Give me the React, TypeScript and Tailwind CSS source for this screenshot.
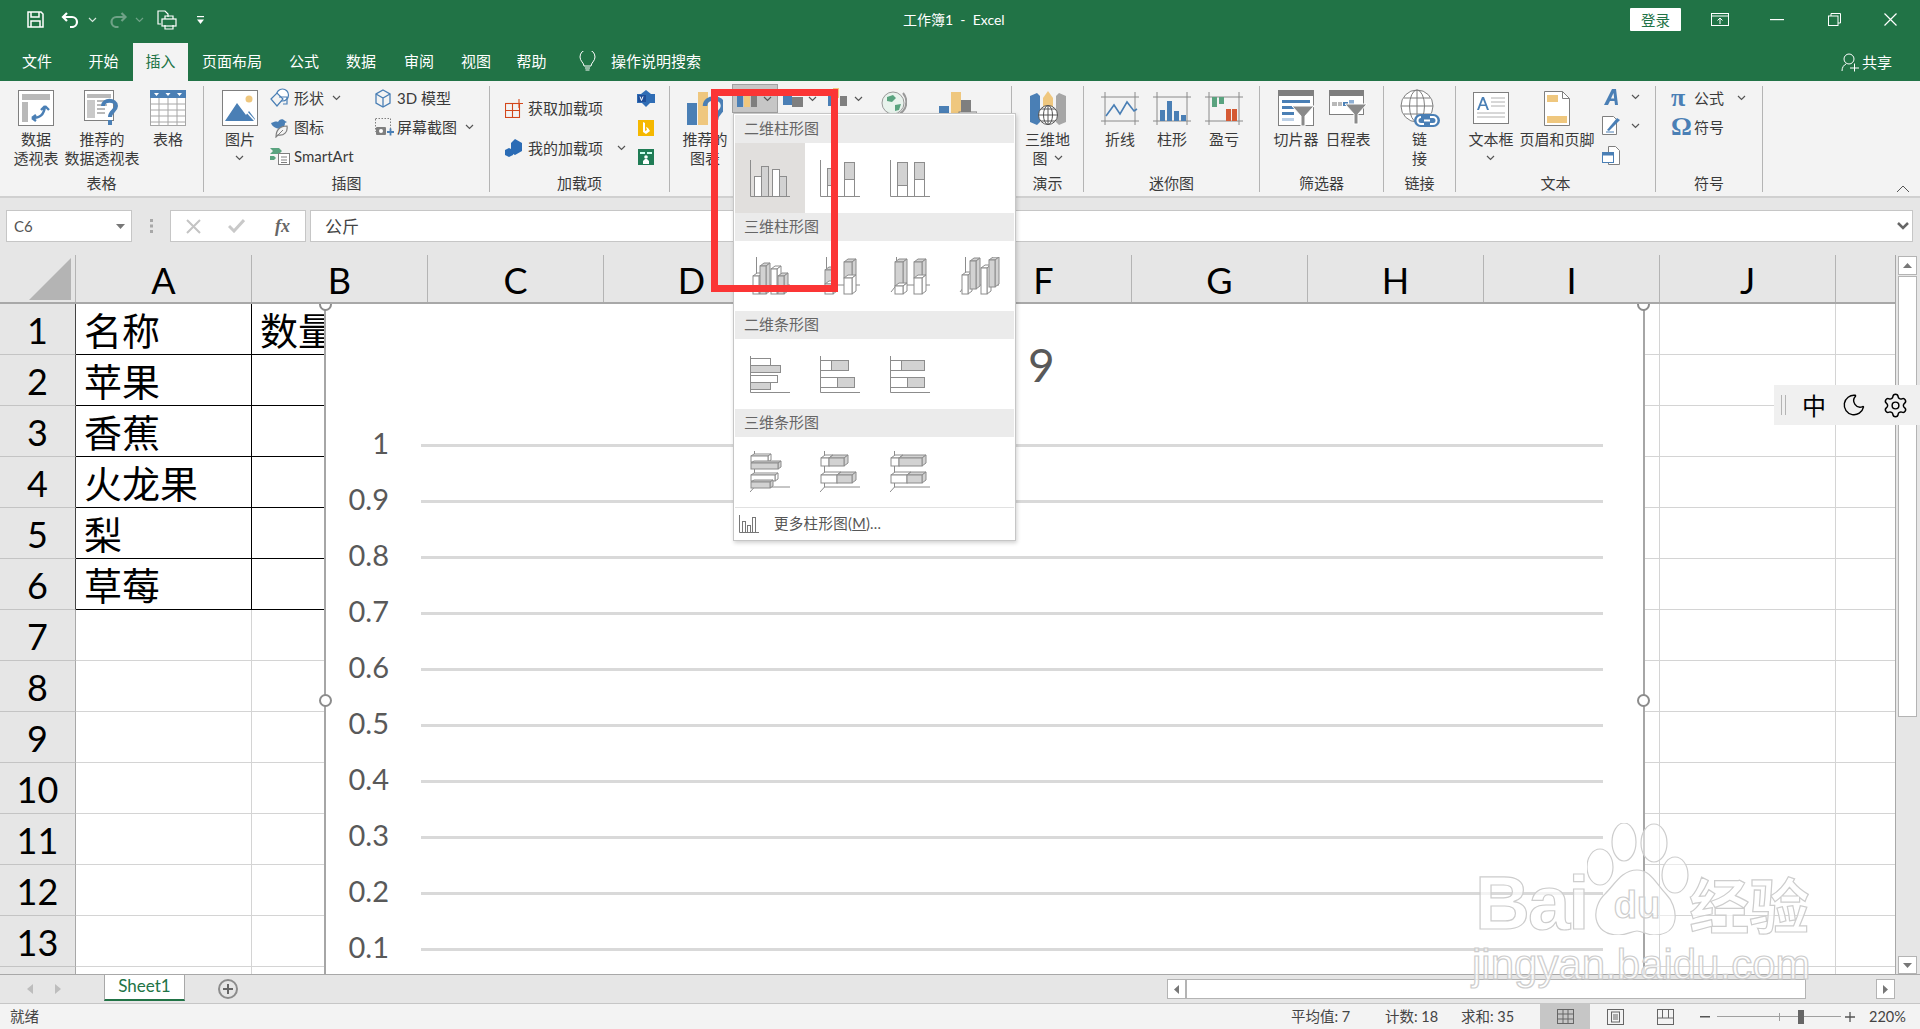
import React from "react";
import { Moon, Settings } from "lucide-react";

const BLUE = "#4a7fb5";
const TAN = "#efc77e";
const GR = "#7f7f7f";
const LG = "#a6a6a6";
const GREEN = "#5aa37f";

const Chev = ({ c = "#555" }: { c?: string }) => (
  <svg width="9" height="6" viewBox="0 0 9 6" className="shrink-0"><path d="M1 1l3.5 3.5L8 1" fill="none" stroke={c} strokeWidth="1.2" /></svg>
);

const Pivot = () => (
  <svg width="36" height="36" viewBox="0 0 36 36">
    <rect x=".5" y=".5" width="35" height="35" fill="#fff" stroke={GR} />
    <rect x="4" y="4" width="28" height="6" fill="#b9b9b9" /><rect x="4" y="12" width="6" height="20" fill="#b9b9b9" />
    <path d="M14 28c8 0 12-3 13-12M27 16l-4 4M27 16l4 4M14 28l4-3M14 28l4 3" fill="none" stroke={BLUE} strokeWidth="2.4" />
  </svg>
);
const RecPivot = () => (
  <svg width="36" height="36" viewBox="0 0 36 36">
    <rect x=".5" y=".5" width="29" height="30" fill="#fff" stroke={GR} />
    <rect x="3" y="4" width="24" height="4" fill="#b9b9b9" /><rect x="3" y="10" width="8" height="18" fill="#c9c9c9" /><path d="M13 11h14M13 15h10M13 19h8M13 23h8" stroke="#b9b9b9" strokeWidth="2" />
    <path d="M19 16c0-7 13-7 13 0 0 5-6 5-6 11" fill="none" stroke={BLUE} strokeWidth="4" /><rect x="24" y="30" width="4" height="5" fill={BLUE} />
  </svg>
);
const TableIc = () => (
  <svg width="36" height="36" viewBox="0 0 36 36">
    <rect x=".5" y=".5" width="35" height="35" fill="#fff" stroke={LG} /><rect width="36" height="8" fill={BLUE} />
    <path d="M4 3h5l-2.5 3zM15.500 3h5L18 6zM27 3h5l-2.500 3z" fill="#fff" />
    <path d="M0 14h36M0 20h36M0 26h36M0 32h36M9 8v28M18 8v28M27 8v28" stroke={LG} />
  </svg>
);
const PicIc = () => (
  <svg width="36" height="36" viewBox="0 0 36 36">
    <rect x=".5" y=".5" width="35" height="35" fill="#fff" stroke={GR} /><circle cx="27" cy="9" r="3.500" fill={TAN} />
    <path d="M3 31L15 13l9 12 3-4 6 8v2z" fill={BLUE} /><path d="M23 20l10 11" stroke="#fff" strokeWidth="1.500" />
  </svg>
);
const ShapeIc = () => (
  <svg width="20" height="20" viewBox="0 0 20 20" fill="#fff" stroke={BLUE} strokeWidth="1.200">
    <circle cx="12.500" cy="7" r="6" /><path d="M1 11l6-6 6 6-6 7z" fill="#f3f3f3" /><path d="M9 9h8v7H13" fill="none" />
  </svg>
);
const IconsIc = () => (
  <svg width="20" height="22" viewBox="0 0 20 22">
    <path d="M1 7c3-1 5-2 7-1 1-3 5-4 7-1l2 1-2 1c0 5-5 7-9 5C4 11 2 10 1 7z" fill={BLUE} />
    <path d="M6 21c0-7 4-11 11-11 1 6-3 10-9 9z" fill="#f3f3f3" stroke={GR} strokeWidth="1.200" /><path d="M6 21l7-7" stroke={GR} />
  </svg>
);
const SmartIc = () => (
  <svg width="20" height="18" viewBox="0 0 20 18">
    <path d="M0 1h9l3 3-3 3H0l3-3z" fill={GREEN} /><path d="M0 9h4l2 2-2 2H0z" fill={GREEN} />
    <rect x="8.500" y="6.500" width="11" height="11" fill="#fff" stroke={GR} /><path d="M11 10h6M11 13h6M11 15.500h6" stroke={GR} />
  </svg>
);
const CubeIc = () => (
  <svg width="16" height="19" viewBox="0 0 16 19" fill="none" stroke={BLUE} strokeWidth="1.300">
    <path d="M8 1l7 4v9l-7 4-7-4V5z" /><path d="M1 5l7 4 7-4M8 9v9" />
  </svg>
);
const ShotIc = () => (
  <svg width="19" height="18" viewBox="0 0 19 18">
    <rect x=".5" y=".5" width="15" height="13" fill="none" stroke={GR} strokeDasharray="1.500 1.500" />
    <rect x="1" y="9" width="10" height="8" rx="1" fill={GR} /><circle cx="6" cy="13" r="2" fill="#fff" />
    <path d="M12 14h7M15.500 10.500v7" stroke={BLUE} strokeWidth="1.800" />
  </svg>
);
const GetAddin = () => (
  <svg width="18" height="19" viewBox="0 0 18 19" fill="none" stroke="#d3471b" strokeWidth="1.100">
    <rect x=".5" y="4.500" width="14" height="14" /><path d="M7.500 4.500v14M.5 11.500h14" /><path d="M14 0v9M9.500 4.500H18" />
  </svg>
);
const MyAddin = () => (
  <svg width="18" height="18" viewBox="0 0 18 18" fill={BLUE}>
    <path d="M10 0l7 4v8l-7 4-4-2V4z" fill="#2a6bb5" /><path d="M4 9l4 2v5l-4 2-4-2v-5z" fill="#2a6bb5" />
  </svg>
);
const Visio = () => (
  <svg width="18" height="17" viewBox="0 0 18 17"><path d="M9 0l5 4h4v9h-5l-4 4-4-4H0V4h4z" fill="#2f6db5" /><rect x="1" y="5" width="8" height="7" fill="#1f4e99" /><path d="M3 6.500l1.500 4L6 6.500" stroke="#fff" fill="none" /></svg>
);
const Bing = () => (
  <svg width="16" height="16" viewBox="0 0 16 16"><rect width="16" height="16" fill="#f5b800" /><path d="M5 2v10l3 2 4-3-2-3-2-1 1 3-2 1V3z" fill="#fff" /></svg>
);
const People = () => (
  <svg width="16" height="16" viewBox="0 0 16 16"><rect width="16" height="16" fill="#1f7c55" /><rect x="2" y="3" width="5" height="2" fill="#cfe" /><rect x="9" y="3" width="5" height="2" fill="#cfe" /><circle cx="8" cy="8" r="1.800" fill="#fff" /><path d="M5 15v-3l2-2h2l2 2v3z" fill="#fff" /></svg>
);
const ColCh = () => (
  <svg width="20" height="16" viewBox="0 0 20 16"><rect x="0" y="3" width="6" height="13" fill={BLUE} /><rect x="7" y="0" width="6" height="16" fill={TAN} /><rect x="14" y="2" width="6" height="14" fill={GR} /></svg>
);
const HierCh = () => (
  <svg width="20" height="20" viewBox="0 0 20 20"><rect x="0" y="0" width="9" height="16" fill={BLUE} /><rect x="9" y="0" width="11" height="7" fill={TAN} /><rect x="9" y="8" width="11" height="10" fill={GR} /></svg>
);
const FlowCh = () => (
  <svg width="20" height="22" viewBox="0 0 20 22"><rect x="0" y="4" width="4" height="14" fill={BLUE} /><rect x="5" y="0" width="6" height="10" fill={TAN} /><rect x="12" y="8" width="7" height="10" fill={GR} /></svg>
);
const Globe = ({ size = 28 }: { size?: number }) => (
  <svg width={size} height={size} viewBox="0 0 28 28">
    <circle cx="14" cy="14" r="11" fill="#e8f2ec" stroke="#999" /><path d="M8 8l6-2 3 3-4 4-5-1zM16 16l6-1-2 6-4 1z" fill={GREEN} /><path d="M24 4A14 14 0 0 1 6 25" fill="none" stroke="#999" strokeWidth="2" />
  </svg>
);
const ComboCh = () => (
  <svg width="38" height="34" viewBox="0 0 38 34"><rect x="0" y="14" width="10" height="20" fill={BLUE} /><rect x="12" y="0" width="10" height="34" fill={TAN} /><rect x="22" y="8" width="10" height="26" fill={GR} /><rect x="20" y="20" width="18" height="14" fill="#fff" stroke={GR} /></svg>
);
const Map3D = () => (
  <svg width="36" height="36" viewBox="0 0 36 36">
    <path d="M0 6l7-3 3 3v26l-3 3-7-3z" fill={BLUE} /><path d="M13 8l5-7 5 7v12H13z" fill={TAN} /><path d="M26 6l3-3 7 3v26l-7 3-3-3z" fill={LG} />
    <circle cx="18" cy="25" r="9.500" fill="#fff" stroke="#555" /><path d="M18 15.500v19M8.500 25h19M11 19h14M11 31h14" stroke="#555" /><ellipse cx="18" cy="25" rx="4.500" ry="9.500" fill="none" stroke="#555" />
  </svg>
);
const Spark = ({ kind }: { kind: 0 | 1 | 2 }) => (
  <svg width="38" height="33" viewBox="0 0 38 33" fill="none">
    <path d="M0 5h38M0 29h38M4 0v33M34 0v33" stroke="#8a8a8a" strokeWidth="1" />
    {kind === 0 && <path d="M5 24l8-11 6 9 7-12 7 9 3-2" stroke={BLUE} strokeWidth="1.600" />}
    {kind === 1 && <g fill={BLUE}><rect x="7" y="18" width="5" height="11" /><rect x="14" y="9" width="5" height="20" /><rect x="21" y="19" width="5" height="10" /><rect x="28" y="23" width="5" height="6" /></g>}
    {kind === 2 && <g><rect x="7" y="5" width="5" height="10" fill={GREEN} /><rect x="14" y="5" width="5" height="7" fill={GREEN} /><rect x="21" y="17" width="5" height="12" fill="#d55a34" /><rect x="27" y="17" width="5" height="12" fill="#d55a34" /></g>}
  </svg>
);
const Slicer = () => (
  <svg width="36" height="36" viewBox="0 0 36 36">
    <rect x=".5" y=".5" width="35" height="35" fill="#fff" stroke={GR} /><rect width="36" height="6" fill={GR} />
    <path d="M4 10h28v3H4zM4 16h17v3H4zM4 22h12v3H4z" fill={BLUE} /><path d="M4 28h12v3H4z" fill="#bcd0e6" />
    <path d="M14 16h22l-9 10v10h-4V26z" fill="#8a8a8a" stroke="#fff" />
  </svg>
);
const Timeline = () => (
  <svg width="38" height="36" viewBox="0 0 38 36">
    <rect x=".5" y=".5" width="34" height="24" fill="#fff" stroke={GR} /><rect width="35" height="6" fill={GR} />
    <path d="M3 12h5v4H3zM9 12h4v4H9z" fill="#b9b9b9" /><path d="M14 12h5v4h-5z" fill={BLUE} /><path d="M20 10h5v4h-5z" fill="#8fb0d4" />
    <path d="M16 14h22l-9 10v10h-4V24z" fill="#8a8a8a" stroke="#fff" />
  </svg>
);
const LinkIc = () => (
  <svg width="40" height="38" viewBox="0 0 40 38">
    <circle cx="17" cy="17" r="16" fill="#fff" stroke={GR} /><ellipse cx="17" cy="17" rx="7.500" ry="16" fill="none" stroke={GR} /><path d="M1 17h32M4 9h26M4 25h26M17 1v32" stroke={GR} />
    <rect x="14" y="25" width="26" height="13" rx="6.500" fill={BLUE} /><path d="M21 28a3.500 3.500 0 0 0 0 7h3M30 28h3a3.500 3.500 0 0 1 0 7h-3M24 31.500h6" stroke="#fff" strokeWidth="2" fill="none" />
  </svg>
);
const TextBox = () => (
  <svg width="36" height="32" viewBox="0 0 36 32">
    <rect x=".5" y=".5" width="35" height="31" fill="#fff" stroke={GR} /><path d="M4 18L9 5h2l5 13h-2l-1.500-4h-5L6 18zM8 12.500h4l-2-5z" fill={BLUE} />
    <path d="M18 6h14M18 10h14M18 14h14M4 21h28M4 25h28" stroke="#b0b0b0" />
  </svg>
);
const Header = () => (
  <svg width="26" height="35" viewBox="0 0 26 35">
    <path d="M.5.500h18l7 7v27H.5z" fill="#fff" stroke={GR} /><path d="M18.500.5v7h7" fill="none" stroke={GR} /><rect x="3" y="4" width="11" height="7" fill={TAN} /><rect x="3" y="25" width="20" height="7" fill={TAN} />
  </svg>
);
const WordArt = () => (
  <svg width="14" height="16" viewBox="0 0 14 16"><path d="M0 16L8 0h4l2 16h-3l-.5-4H6l-2 4zM7 9.500h3.200L9.500 4z" fill={BLUE} /></svg>
);
const SigIc = () => (
  <svg width="20" height="19" viewBox="0 0 20 19">
    <path d="M.5.500h11l3 3v15H.5z" fill="#fff" stroke={GR} /><path d="M4 16h8" stroke={BLUE} /><path d="M5 14l10-12 3 2L7 15z" fill={BLUE} />
  </svg>
);
const ObjIc = () => (
  <svg width="18" height="19" viewBox="0 0 18 19">
    <path d="M6.500.500h7l4 4v14h-11z" fill="#fff" stroke={GR} /><rect x=".5" y="6.500" width="11" height="10" fill="#fff" stroke={BLUE} /><rect x="1" y="7" width="10" height="2.500" fill={BLUE} />
  </svg>
);

type BigProps = { w: number; icon: React.ReactNode; lines: React.ReactNode[]; };
const Big = ({ w, icon, lines }: BigProps) => (
  <div className="flex flex-col items-center shrink-0" style={{ width: w }}>
    <div className="h-[36px] flex items-center justify-center">{icon}</div>
    <div className="mt-[3px] flex flex-col items-center leading-[19px] whitespace-nowrap text-[15px] text-[#3a3a3a]">
      {lines.map((l, i) => <div key={i} className="h-[19px] flex items-center gap-[6px]">{l}</div>)}
    </div>
  </div>
);

const Small = ({ icon, text, iw, chev, chevGap = 8 }: { icon: React.ReactNode; text: string; iw: number; chev?: boolean; chevGap?: number }) => (
  <div className="h-[24px] flex items-center text-[15px] text-[#3a3a3a] whitespace-nowrap">
    <div className="flex items-center shrink-0" style={{ width: iw }}>{icon}</div>
    <span>{text}</span>
    {chev && <span className="flex" style={{ marginLeft: chevGap }}><Chev /></span>}
  </div>
);

const Group = ({ w, label, children, pl = 0 }: { w: number; label: string; children: React.ReactNode; pl?: number }) => (
  <div className="shrink-0 h-[106px] border-r border-[#b4b4b4] flex flex-col" style={{ width: w }}>
    <div className="h-[91px] flex" style={{ paddingLeft: pl }}>{children}</div>
    <div className="text-center text-[15px] leading-[18px] text-[#3a3a3a] whitespace-nowrap">{label}</div>
  </div>
);

const tabs: [string, number, number][] = [
  ["文件", 0, 74], ["开始", 74, 59], ["插入", 133, 55], ["页面布局", 188, 88], ["公式", 276, 56], ["数据", 332, 58], ["审阅", 390, 58], ["视图", 448, 56], ["帮助", 504, 55],
];

const TitleBar = () => (
  <div className="h-[43px] pb-[4px] flex items-center relative text-white shrink-0">
    <div className="pl-[27px] flex items-center w-[1630px]">
      <svg width="17" height="17" viewBox="0 0 17 17" fill="none" stroke="#fff" strokeWidth="1.500"><path d="M1 1h13l2 2v13H1z" /><path d="M4 1v5h8V1M4 16v-6h9v6" /></svg>
      <svg className="ml-[17px]" width="18" height="16" viewBox="0 0 18 16" fill="none" stroke="#fff" strokeWidth="2.200"><path d="M6 1L2 5l4 4M2 5h9a5 5 0 0 1 0 10H9" /></svg>
      <span className="ml-[9px] flex"><Chev c="#d5e6dc" /></span>
      <svg className="ml-[12px]" width="19" height="16" viewBox="0 0 18 16" fill="none" stroke="#6fa287" strokeWidth="2.200"><path d="M12 1l4 4-4 4M16 5H7a5 5 0 0 0 0 10h2" /></svg>
      <span className="ml-[7px] flex"><Chev c="#6fa287" /></span>
      <svg className="ml-[13px]" width="20" height="20" viewBox="0 0 20 20" fill="none" stroke="#fff" strokeWidth="1.200"><path d="M4 14H1V1h7l3 3v3" /><rect x="5" y="9" width="14" height="7" /><path d="M8 9V6h8v3M8 15v4h8v-4" /></svg>
      <svg className="ml-[20px]" width="7" height="8" viewBox="0 0 7 8" fill="#fff"><rect width="7" height="1.200" /><path d="M0 3.500h7L3.500 8z" /></svg>
      <div className="ml-[699px] text-[14px] font-['Lato','Noto_Sans_CJK_SC',sans-serif] whitespace-nowrap">工作簿1&nbsp; -&nbsp; Excel</div>
    </div>
    <div className="w-[51px] h-[23px] bg-white rounded-[1px] flex items-center justify-center text-[#217346] text-[14.500px]">登录</div>
    <svg className="ml-[30px]" width="18" height="13" viewBox="0 0 18 13" fill="none" stroke="#fff"><rect x=".5" y=".5" width="17" height="12" /><path d="M.5 3h17" /><path d="M9 11V5M6.500 7.500L9 5l2.500 2.500" /></svg>
    <svg className="ml-[41px]" width="14" height="2" viewBox="0 0 14 2"><rect width="14" height="1.200" fill="#fff" /></svg>
    <svg className="ml-[44px]" width="13" height="13" viewBox="0 0 13 13" fill="none" stroke="#fff"><rect x=".5" y="3" width="9.500" height="9.500" /><path d="M3 3V.5h9.500V10H10" /></svg>
    <svg className="ml-[43px]" width="13" height="13" viewBox="0 0 13 13" fill="none" stroke="#fff" strokeWidth="1.200"><path d="M.5.500l12 12M12.500.5l-12 12" /></svg>
  </div>
);

const TabRow = () => (
  <div className="h-[38px] flex items-stretch shrink-0 text-[15px] text-white whitespace-nowrap relative">
    {tabs.map(([t, , w]) => (
      <div key={t} className={t === "插入" ? "bg-[#f3f3f3] text-[#217346] flex items-center justify-center pb-[2px]" : "flex items-center justify-center pb-[2px]"} style={{ width: w }}>{t}</div>
    ))}
    <div className="ml-[20px] flex items-center pb-[2px]">
      <svg width="17" height="21" viewBox="0 0 17 21" fill="none" stroke="#fff"><path d="M5 15c0-3-4-5-4-9a7.500 7.500 0 0 1 15 0c0 4-4 6-4 9z" /><path d="M6 17h5M6.500 19h4" /></svg>
      <span className="ml-[15px]">操作说明搜索</span>
    </div>
    <div className="flex-1" />
    <div className="flex items-center pr-[28px]">
      <svg width="18" height="19" viewBox="0 0 18 19" fill="none" stroke="#fff"><circle cx="8" cy="6" r="5" /><path d="M1 18c0-4 2-6 4-7M9 15h9M13.500 10.500v8" /></svg>
      <span className="ml-[3px]">共享</span>
    </div>
  </div>
);

const Ribbon = () => (
  <div className="h-[117px] bg-[#f3f3f3] border-b-2 border-[#d0d0d0] shrink-0 flex pt-[5px] relative">
    <Group w={204} label="表格" pl={3}>
      <div className="flex pt-[4px]">
        <Big w={66} icon={<Pivot />} lines={["数据", "透视表"]} />
        <Big w={66} icon={<RecPivot />} lines={["推荐的", "数据透视表"]} />
        <Big w={66} icon={<TableIc />} lines={["表格"]} />
      </div>
    </Group>
    <Group w={286} label="插图" pl={6}>
      <div className="flex pt-[4px]">
        <Big w={60} icon={<PicIc />} lines={["图片", <Chev key="c" />]} />
      </div>
      <div className="w-[105px] flex flex-col gap-[5px] font-['Lato','Noto_Sans_CJK_SC',sans-serif]">
        <Small icon={<ShapeIc />} text="形状" iw={24} chev />
        <Small icon={<IconsIc />} text="图标" iw={24} />
        <Small icon={<SmartIc />} text="SmartArt" iw={24} />
      </div>
      <div className="flex flex-col gap-[5px] font-['Lato','Noto_Sans_CJK_SC',sans-serif]">
        <Small icon={<CubeIc />} text="3D 模型" iw={22} />
        <Small icon={<ShotIc />} text="屏幕截图" iw={22} chev />
      </div>
    </Group>
    <Group w={180} label="加载项" pl={15}>
      <div className="w-[132px] flex flex-col gap-[16px] pt-[10px]">
        <Small icon={<GetAddin />} text="获取加载项" iw={23} />
        <Small icon={<MyAddin />} text="我的加载项" iw={23} chev chevGap={14} />
      </div>
      <div className="flex flex-col gap-[13px] pt-[4px] items-center w-[18px]">
        <Visio /><Bing /><People />
      </div>
    </Group>
    <Group w={342} label="图表" pl={2}>
      <div className="w-[60px] flex pt-[4px] pl-[3px]">
        <Big w={60} icon={<svg width="36" height="33" viewBox="0 0 36 33"><rect x="0" y="11" width="10" height="22" fill={BLUE} /><rect x="11" y="0" width="10" height="33" fill={TAN} /><path d="M18 14c0-10 18-10 18 0 0 6-7 6-7 14" fill="none" stroke={BLUE} strokeWidth="4.500" /></svg>} lines={["推荐的", "图表"]} />
      </div>
      <div className="h-[29px] w-[46px] -mt-[2px] bg-[#c6c6c6] border border-[#a0a0a0] flex items-center pl-[4px] gap-[6px] shrink-0">
        <ColCh /><Chev />
      </div>
      <div className="h-[29px] w-[45px] -mt-[2px] flex items-center pl-[5px] gap-[5px] shrink-0"><HierCh /><Chev /></div>
      <div className="h-[29px] w-[48px] -mt-[2px] flex items-center pl-[5px] gap-[6px] shrink-0"><FlowCh /><Chev /></div>
      <div className="w-[68px] pl-[8px] pt-[3px] shrink-0"><Globe /></div>
      <div className="pt-[6px] shrink-0"><ComboCh /></div>
    </Group>
    <Group w={72} label="演示">
      <div className="flex pt-[4px] w-full justify-center">
        <Big w={60} icon={<Map3D />} lines={["三维地", <><span>图</span><Chev /></>]} />
      </div>
    </Group>
    <Group w={176} label="迷你图" pl={10}>
      <div className="flex pt-[5px]">
        <div className="-mt-px"><Big w={52} icon={<Spark kind={0} />} lines={["折线"]} /></div>
        <div className="-mt-px"><Big w={52} icon={<Spark kind={1} />} lines={["柱形"]} /></div>
        <div className="-mt-px"><Big w={52} icon={<Spark kind={2} />} lines={["盈亏"]} /></div>
      </div>
    </Group>
    <Group w={124} label="筛选器" pl={10}>
      <div className="flex pt-[4px]">
        <Big w={52} icon={<Slicer />} lines={["切片器"]} />
        <Big w={52} icon={<Timeline />} lines={["日程表"]} />
      </div>
    </Group>
    <Group w={72} label="链接">
      <div className="flex pt-[4px] w-full justify-center">
        <Big w={60} icon={<LinkIc />} lines={["链", "接"]} />
      </div>
    </Group>
    <Group w={200} label="文本" pl={4}>
      <div className="flex pt-[4px]">
        <Big w={62} icon={<TextBox />} lines={["文本框", <Chev key="c" />]} />
        <Big w={70} icon={<Header />} lines={["页眉和页脚"]} />
      </div>
      <div className="ml-[10px] pt-[3px] flex flex-col gap-[11px]">
        <div className="flex items-center h-[16px] pl-[2px]"><WordArt /><span className="ml-[13px] flex"><Chev /></span></div>
        <div className="flex items-center h-[19px]"><SigIc /><span className="ml-[9px] flex"><Chev /></span></div>
        <div className="flex items-center h-[19px]"><ObjIc /></div>
      </div>
    </Group>
    <Group w={107} label="符号" pl={15}>
      <div className="flex flex-col gap-[5px]">
        <div className="h-[24px] flex items-center text-[15px] text-[#3a3a3a]">
          <span className="w-[23px] text-[#4a7fb5] text-[26px] font-bold font-['Liberation_Serif',serif] leading-none">π</span><span>公式</span><span className="ml-[13px] flex"><Chev /></span>
        </div>
        <div className="h-[24px] flex items-center text-[15px] text-[#3a3a3a]">
          <span className="w-[23px] text-[#4a7fb5] text-[26px] font-bold font-['Liberation_Serif',serif] leading-none">Ω</span><span>符号</span>
        </div>
      </div>
    </Group>
    <div className="flex-1 flex items-end justify-end pr-[10px] pb-[3px]">
      <svg width="14" height="8" viewBox="0 0 14 8" fill="none" stroke="#555"><path d="M1 7l6-6 6 6" /></svg>
    </div>
  </div>
);

const FormulaBar = () => (
  <div className="h-[57px] bg-[#e6e6e6] shrink-0 flex items-start pt-[12px] pl-[6px] pr-[7px] text-[#444]">
    <div className="w-[126px] h-[32px] bg-white border border-[#c6c6c6] flex items-center pl-[7px] pr-[6px] justify-between font-['Lato',sans-serif] text-[15px] text-[#555]">
      C6
      <svg width="9" height="5" viewBox="0 0 9 5" fill="#777"><path d="M0 0h9L4.500 5z" /></svg>
    </div>
    <div className="w-[38px] h-[32px] flex items-center justify-center">
      <svg width="3" height="14" viewBox="0 0 3 14" fill="#a8a8a8"><rect width="3" height="3" /><rect y="5.500" width="3" height="3" /><rect y="11" width="3" height="3" /></svg>
    </div>
    <div className="w-[136px] h-[32px] bg-white border border-[#c6c6c6] flex items-center pl-[15px] gap-[27px]">
      <svg width="15" height="15" viewBox="0 0 15 15" stroke="#c4c4c4" strokeWidth="2" fill="none"><path d="M1 1l13 13M14 1L1 14" /></svg>
      <svg width="17" height="14" viewBox="0 0 17 14" stroke="#c9c9c9" strokeWidth="3" fill="none"><path d="M1 7l5 5L16 1" /></svg>
      <span className="ml-[3px] font-['Liberation_Serif',serif] italic font-bold text-[18px] text-[#666] leading-none">fx</span>
    </div>
    <div className="ml-[4px] flex-1 h-[32px] bg-white border border-[#c6c6c6] flex items-center pl-[14px] pr-[3px] justify-between text-[17px] text-[#444]">
      公斤
      <svg width="12" height="9" viewBox="0 0 12 9" fill="none" stroke="#666" strokeWidth="2.500"><path d="M1 1l5 5 5-5" /></svg>
    </div>
  </div>
);

const COLS = ["A", "B", "C", "D", "E", "F", "G", "H", "I", "J"];
const DATA: Record<number, [string, string]> = {
  1: ["名称", "数量"], 2: ["苹果", ""], 3: ["香蕉", ""], 4: ["火龙果", ""], 5: ["梨", ""], 6: ["草莓", ""],
};
const HEAD_FONT = "font-['Lato','Liberation_Sans',sans-serif]";

const ColHeader = () => (
  <div className={`h-[49px] flex bg-[#e6e6e6] border-b-2 border-[#a8a8a8] shrink-0 text-[36px] leading-none text-black ${HEAD_FONT}`}>
    <div className="w-[76px] shrink-0 border-r border-[#b4b4b4] flex items-end justify-end pr-[3px] pb-[2px]">
      <svg width="43" height="42" viewBox="0 0 43 42"><path d="M42 0v42H0z" fill="#b4b4b4" /></svg>
    </div>
    {COLS.map(c => <div key={c} className="w-[176px] shrink-0 border-r border-[#b4b4b4] flex items-center justify-center pt-[2px]">{c}</div>)}
  </div>
);

const Row = ({ r, h = 51, num = true }: { r: number; h?: number; num?: boolean }) => {
  const d = DATA[r];
  const b = d ? "border-black" : "border-[#d4d4d4]";
  return (
    <div className={`flex shrink-0 ${num ? "" : "overflow-hidden"}`} style={{ height: h }}>
      <div className={`w-[76px] shrink-0 bg-[#e6e6e6] border-b border-[#c4c4c4] border-r flex items-center justify-center pt-[2px] text-[36px] text-black leading-none ${HEAD_FONT} ${d ? "border-r-[#444]" : "border-r-[#a8a8a8]"}`}>{num ? r : ""}</div>
      <div className={`w-[176px] shrink-0 border-r border-b ${b} flex items-center pl-[8px] text-[38px] leading-[50px] text-black whitespace-nowrap`}>{d?.[0]}</div>
      <div className={`w-[176px] shrink-0 border-r border-b ${b} flex items-center pl-[8px] text-[38px] leading-[50px] text-black whitespace-nowrap`}>{d?.[1]}</div>
      {COLS.slice(2).map(c => <div key={c} className="w-[176px] shrink-0 border-r border-b border-[#d4d4d4]" />)}
      <div className="flex-1 border-b border-[#d4d4d4]" />
    </div>
  );
};

const Handle = ({ cls }: { cls: string }) => (
  <div className={`absolute w-[13px] h-[13px] rounded-full bg-white border-2 border-[#8c8c8c] ${cls}`} />
);

const Chart = () => {
  const labels = ["1", "0.9", "0.8", "0.7", "0.6", "0.5", "0.4", "0.3", "0.2", "0.1", "0"];
  return (
    <div className={`absolute left-[324px] top-0 w-[1321px] h-[793px] bg-white border-x-2 border-[#a6a6a6] text-[#595959] ${HEAD_FONT}`}>
      <div className="h-[113px] pl-[702px] pt-[38px] text-[46px] leading-[46px]">9</div>
      {labels.map(l => (
        <div key={l} className="h-[56px] flex items-center pr-[40px]">
          <div className="w-[63px] text-right text-[29px] leading-none pb-[6px]">{l}</div>
          <div className="ml-[32px] flex-1 h-[3px] bg-[#d9d9d9]" />
        </div>
      ))}
      <Handle cls="-left-[7px] -top-[6px]" />
      <Handle cls="-right-[7px] -top-[6px]" />
      <Handle cls="-left-[7px] top-[390px]" />
      <Handle cls="-right-[7px] top-[390px]" />
    </div>
  );
};

const Sheet = () => (
  <div className="flex shrink-0 h-[719px]">
    <div className="w-[1896px] shrink-0 flex flex-col border-r border-[#a8a8a8] overflow-hidden">
      <ColHeader />
      <div className="relative flex-1 overflow-hidden flex flex-col bg-white">
        {Array.from({ length: 13 }, (_, i) => <Row key={i} r={i + 1} />)}
        <Row r={14} h={8} num={false} />
        <Chart />
      </div>
    </div>
    <div className="flex-1 bg-[#e6e6e6] pl-[2px] pr-[3px] flex flex-col">
      <div className="h-[19px] mt-px bg-white border border-[#b4b4b4] flex items-center justify-center">
        <svg width="9" height="5" viewBox="0 0 9 5" fill="#777"><path d="M0 5h9L4.500 0z" /></svg>
      </div>
      <div className="h-[441px] mt-px bg-white border border-[#b4b4b4]" />
      <div className="flex-1" />
      <div className="h-[18px] bg-white border border-[#b4b4b4] flex items-center justify-center">
        <svg width="9" height="5" viewBox="0 0 9 5" fill="#777"><path d="M0 0h9L4.500 5z" /></svg>
      </div>
    </div>
  </div>
);

const SheetTabs = () => (
  <div className="h-[29px] shrink-0 bg-[#e6e6e6] border-t border-[#a8a8a8] flex">
    <div className="w-[104px] shrink-0 flex items-center pl-[27px] gap-[22px]">
      <svg width="6" height="10" viewBox="0 0 6 10" fill="#bdbdbd"><path d="M6 0v10L0 5z" /></svg>
      <svg width="6" height="10" viewBox="0 0 6 10" fill="#bdbdbd"><path d="M0 0v10l6-5z" /></svg>
    </div>
    <div className={`w-[81px] h-[26px] shrink-0 bg-white border-x border-[#a8a8a8] border-b-2 border-b-[#217346] flex items-center justify-center pb-[2px] text-[#217346] text-[17px] ${HEAD_FONT}`}>Sheet1</div>
    <div className="ml-[33px] mt-[4px] w-[20px] h-[20px] rounded-full border-2 border-[#8c8c8c] flex items-center justify-center shrink-0">
      <svg width="10" height="10" viewBox="0 0 10 10"><path d="M5 0v10M0 5h10" stroke="#666" strokeWidth="2" /></svg>
    </div>
    <div className="w-[929px] shrink-0" />
    <div className="w-[19px] h-[20px] mt-[4px] bg-white border border-[#b4b4b4] flex items-center justify-center shrink-0">
      <svg width="5" height="9" viewBox="0 0 5 9" fill="#777"><path d="M5 0v9L0 4.500z" /></svg>
    </div>
    <div className="w-[620px] h-[20px] mt-[4px] bg-white border border-[#b4b4b4] shrink-0" />
    <div className="w-[70px] shrink-0" />
    <div className="w-[19px] h-[20px] mt-[4px] bg-white border border-[#b4b4b4] flex items-center justify-center shrink-0">
      <svg width="5" height="9" viewBox="0 0 5 9" fill="#777"><path d="M0 0v9l5-4.500z" /></svg>
    </div>
  </div>
);

const StatusBar = () => (
  <div className="flex-1 bg-[#f3f3f3] border-t border-[#c6c6c6] flex items-stretch text-[14.500px] text-[#444] whitespace-nowrap font-['Lato','Noto_Sans_CJK_SC',sans-serif]">
    <div className="pl-[10px] w-[1291px] flex items-center">就绪</div>
    <div className="w-[94px] flex items-center">平均值: 7</div>
    <div className="w-[76px] flex items-center">计数: 18</div>
    <div className="w-[79px] flex items-center">求和: 35</div>
    <div className="w-[50px] bg-[#c6c6c6] flex items-center justify-center">
      <svg width="17" height="15" viewBox="0 0 17 15" fill="none" stroke="#666"><rect x=".5" y=".5" width="16" height="14" /><path d="M6 .5v14M11 .5v14M.5 5h16M.5 10h16" /></svg>
    </div>
    <div className="w-[50px] flex items-center justify-center">
      <svg width="17" height="16" viewBox="0 0 17 16" fill="none" stroke="#666"><rect x=".5" y=".5" width="16" height="15" /><rect x="4.500" y="3" width="8" height="10" /><path d="M6 6h5M6 8h5M6 10h5" /></svg>
    </div>
    <div className="w-[50px] flex items-center justify-center">
      <svg width="17" height="16" viewBox="0 0 17 16" fill="none" stroke="#666"><rect x=".5" y=".5" width="16" height="15" /><path d="M.5 9h16M5.500.5V9M11.500.5V9" /></svg>
    </div>
    <div className="flex items-center pl-[10px]">
      <svg width="10" height="2" viewBox="0 0 10 2"><rect width="10" height="1.500" fill="#555" /></svg>
      <div className="ml-[7px] w-[124px] h-px bg-[#a0a0a0] relative flex items-center">
        <div className="ml-[62px] w-px h-[8px] bg-[#a0a0a0]" />
        <div className="ml-[18px] w-[6px] h-[14px] bg-[#666]" />
      </div>
      <svg className="ml-[4px]" width="10" height="10" viewBox="0 0 10 10"><path d="M0 5h10M5 0v10" stroke="#555" strokeWidth="1.300" /></svg>
      <span className="ml-[14px]">220%</span>
    </div>
  </div>
);

const GC = "#8c8c8c";
const Col = ({ x, y, w, h, f }: { x: number; y: number; w: number; h: number; f: string }) => <rect x={x + 0.5} y={y + 0.5} width={w} height={h} fill={f} stroke={GC} />;
const Axes2D = () => <path d="M.5 0v36.500H40" fill="none" stroke={GC} />;
const G2 = "#d2d2d2";

const Prism = ({ x, y, w, h, dx = 4, dy = 3, f }: { x: number; y: number; w: number; h: number; dx?: number; dy?: number; f: string }) => (
  <g stroke={GC} fill={f}>
    <path d={`M${x} ${y}l${dx} ${-dy}h${w}l${-dx} ${dy}z`} />
    <path d={`M${x + w} ${y}l${dx} ${-dy}v${h}l${-dx} ${dy}z`} />
    <rect x={x} y={y} width={w} height={h} />
  </g>
);

const gIcons2D = [
  <svg key="a" width="40" height="37"><Axes2D /><Col x={4} y={16} w={7} h={20} f="#fff" /><Col x={11} y={6} w={7} h={30} f={G2} /><Col x={22} y={9} w={7} h={27} f="#fff" /><Col x={29} y={16} w={7} h={20} f={G2} /></svg>,
  <svg key="b" width="40" height="37"><Axes2D /><Col x={7} y={8} w={10} h={17} f={G2} /><Col x={7} y={25} w={10} h={11} f="#fff" /><Col x={24} y={2} w={10} h={17} f={G2} /><Col x={24} y={19} w={10} h={17} f="#fff" /></svg>,
  <svg key="c" width="40" height="37"><Axes2D /><Col x={7} y={2} w={10} h={23} f={G2} /><Col x={7} y={25} w={10} h={11} f="#fff" /><Col x={24} y={2} w={10} h={17} f={G2} /><Col x={24} y={19} w={10} h={17} f="#fff" /></svg>,
];
const Axis3D = () => <path d="M6.500 0v28L1 35M6 28h34" fill="none" stroke={GC} />;
const gIcons3D = [
  <svg key="a" width="42" height="38"><Axis3D /><Prism x={3} y={19} w={6} h={18} f="#fff" /><Prism x={10} y={9} w={6} h={28} f={G2} /><Prism x={21} y={12} w={6} h={25} f="#fff" /><Prism x={28} y={19} w={6} h={18} f={G2} /></svg>,
  <svg key="b" width="42" height="38"><Axis3D /><Prism x={5} y={13} w={8} h={14} f={G2} /><Prism x={5} y={27} w={8} h={10} f="#fff" /><Prism x={24} y={5} w={8} h={16} f={G2} /><Prism x={24} y={21} w={8} h={16} f="#fff" /></svg>,
  <svg key="c" width="42" height="38"><Axis3D /><Prism x={5} y={5} w={8} h={24} f={G2} /><Prism x={5} y={29} w={8} h={8} f="#fff" /><Prism x={24} y={5} w={8} h={16} f={G2} /><Prism x={24} y={21} w={8} h={16} f="#fff" /></svg>,
  <svg key="d" width="42" height="38"><Axis3D /><Prism x={3} y={18} w={6} h={19} f="#fff" /><Prism x={11} y={4} w={6} h={28} f={G2} /><Prism x={22} y={11} w={6} h={26} f="#fff" /><Prism x={30} y={3} w={6} h={27} f={G2} /></svg>,
];
const gBars2D = [
  <svg key="a" width="40" height="37"><Axes2D /><Col x={0} y={2} w={20} h={7} f="#fff" /><Col x={0} y={9} w={30} h={7} f={G2} /><Col x={0} y={19} w={27} h={7} f="#fff" /><Col x={0} y={26} w={20} h={7} f={G2} /></svg>,
  <svg key="b" width="40" height="37"><Axes2D /><Col x={0} y={4} w={11} h={10} f="#fff" /><Col x={11} y={4} w={17} h={10} f={G2} /><Col x={0} y={21} w={17} h={10} f="#fff" /><Col x={17} y={21} w={17} h={10} f={G2} /></svg>,
  <svg key="c" width="40" height="37"><Axes2D /><Col x={0} y={4} w={11} h={10} f="#fff" /><Col x={11} y={4} w={23} h={10} f={G2} /><Col x={0} y={21} w={17} h={10} f="#fff" /><Col x={17} y={21} w={17} h={10} f={G2} /></svg>,
];
const BarAxis = () => <path d="M4.500 0v36L0 41M4 36h36" fill="none" stroke={GC} />;
const gBars3D = [
  <svg key="a" width="42" height="42"><BarAxis /><Prism x={1} y={5} w={17} h={6} dy={2} dx={3} f="#fff" /><Prism x={1} y={12} w={27} h={6} dy={2} dx={3} f={G2} /><Prism x={1} y={24} w={24} h={6} dy={2} dx={3} f="#fff" /><Prism x={1} y={31} w={19} h={6} dy={2} dx={3} f={G2} /></svg>,
  <svg key="b" width="42" height="42"><BarAxis /><Prism x={1} y={7} w={8} h={8} dy={3} f="#fff" /><Prism x={9} y={7} w={15} h={8} dy={3} f={G2} /><Prism x={1} y={24} w={16} h={8} dy={3} f="#fff" /><Prism x={17} y={24} w={15} h={8} dy={3} f={G2} /></svg>,
  <svg key="c" width="42" height="42"><BarAxis /><Prism x={1} y={7} w={8} h={8} dy={3} f="#fff" /><Prism x={9} y={7} w={23} h={8} dy={3} f={G2} /><Prism x={1} y={24} w={16} h={8} dy={3} f="#fff" /><Prism x={17} y={24} w={15} h={8} dy={3} f={G2} /></svg>,
];

const GHead = ({ t }: { t: string }) => (
  <div className="h-[28px] bg-[#ebebeb] pl-[9px] pb-[2px] flex items-center text-[15px] text-[#666]">{t}</div>
);
const GRow = ({ items, hi }: { items: React.ReactNode[]; hi?: boolean }) => (
  <div className="h-[70px] flex">
    {items.map((it, i) => (
      <div key={i} className={`w-[70px] h-[70px] pl-[15px] flex items-center ${hi && i === 0 ? "bg-[#e1dfdd]" : ""}`}>{it}</div>
    ))}
  </div>
);

const Menu = () => (
  <div className="absolute left-[733px] top-[113px] w-[283px] h-[428px] bg-white border border-[#c6c6c6] shadow-[1px_2px_4px_rgba(0,0,0,0.18)] p-px flex flex-col z-20 text-[#444]">
    <GHead t="二维柱形图" /><GRow items={gIcons2D} hi />
    <GHead t="三维柱形图" /><GRow items={gIcons3D} />
    <GHead t="二维条形图" /><GRow items={gBars2D} />
    <GHead t="三维条形图" /><GRow items={gBars3D} />
    <div className="border-t border-[#e1e1e1] flex-1 flex items-center pl-[4px] text-[14.500px] text-[#555]">
      <svg width="20" height="18" viewBox="0 0 20 18" fill="none" stroke="#777"><path d="M.5 0v17.500H20" /><rect x="3.500" y="6.500" width="3" height="11" /><rect x="8.500" y="10.500" width="3" height="7" /><rect x="13.500" y="2.500" width="3" height="15" /></svg>
      <span className="ml-[15px] font-['Lato','Noto_Sans_CJK_SC',sans-serif] tracking-[0.3px]">更多柱形图(<span className="underline">M</span>)...</span>
    </div>
  </div>
);

const ImeBar = () => (
  <div className="absolute left-[1774px] top-[385px] w-[146px] h-[40px] bg-[#f0f0f0] flex items-center z-10 text-black">
    <div className="ml-[7px] w-[5px] h-[20px] border-x border-[#b4b4b4]" />
    <span className="ml-[16px] text-[24px] leading-none">中</span>
    <Moon className="ml-[15px]" size={26} strokeWidth={1.300} style={{ transform: "rotate(10deg)" }} />
    <Settings className="ml-[15px]" size={27} strokeWidth={1.300} />
  </div>
);

const WM = "text-[#ffffffb0] [-webkit-text-stroke:1.200px_#cdcdcd] font-bold";
const Watermark = () => (
  <div className="absolute left-[1472px] top-[823px] z-10 pointer-events-none">
    <div className="flex items-end">
      <span className={`${WM} font-['Liberation_Sans',sans-serif] text-[76px] leading-[64px] tracking-[-2px] pl-[3px]`}>Bai</span>
      <svg width="102" height="112" viewBox="0 0 102 112" fill="#ffffff80" stroke="#cdcdcd" strokeWidth="1.200" className="shrink-0">
        <ellipse cx="13" cy="44" rx="13" ry="18" /><ellipse cx="37" cy="19" rx="12" ry="19" /><ellipse cx="67" cy="20" rx="13" ry="19" /><ellipse cx="88" cy="52" rx="13" ry="18" />
        <path d="M50 47c14 0 19 14 29 24 12 12 16 41-12 41-7 0-12-4-17-4s-10 4-18 4C4 112 4 84 18 71c10-10 17-24 32-24z" />
        <text x="50" y="95" textAnchor="middle" fontFamily="Liberation Sans" fontWeight="700" fontSize="38">du</text>
      </svg>
      <span className={`${WM} font-['Noto_Sans_CJK_SC',sans-serif] text-[60px] leading-[64px] whitespace-nowrap`}>经验</span>
    </div>
    <div className="text-[#ffffffb0] [-webkit-text-stroke:1.200px_#cdcdcd] font-['Liberation_Sans',sans-serif] text-[42px] leading-[48px] whitespace-nowrap mt-[6px]">jingyan.baidu.com</div>
  </div>
);

export default function App() {
  return (
    <div className="relative w-[1920px] h-[1029px] overflow-hidden flex flex-col bg-[#217346] font-['Noto_Sans_CJK_SC','Lato',sans-serif]">
      <TitleBar />
      <TabRow />
      <Ribbon />
      <FormulaBar />
      <Sheet />
      <SheetTabs />
      <StatusBar />
      <Menu />
      <div className="absolute left-[711px] top-[89px] w-[127px] h-[203px] border-[7px] border-[#fb3535] z-30" />
      <ImeBar />
      <Watermark />
    </div>
  );
}
